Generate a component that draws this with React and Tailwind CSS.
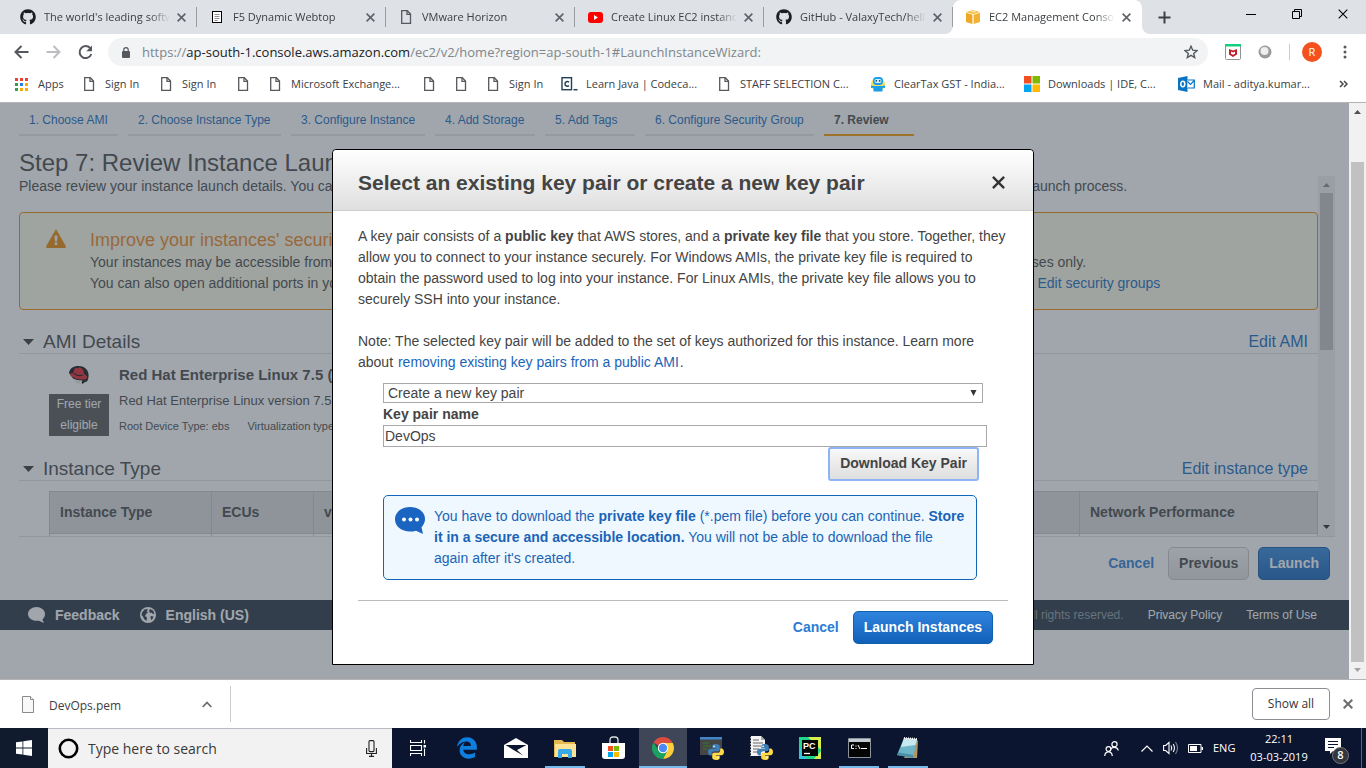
import React from "react";
import { FaGithub, FaEdgeLegacy } from "react-icons/fa";

const ui = "font-['Open_Sans','Noto_Sans',sans-serif]";

/* ---------- icons ---------- */

function PageIcon() {
  return (
    <svg width="12" height="14" viewBox="0 0 12 14" fill="none" stroke="#55585c" strokeWidth="1.3" aria-hidden="true">
      <path d="M1.7.7h5.6l3.2 3.4v9.2H1.7z" />
      <path d="M7 .9v3.5h3.4" />
    </svg>
  );
}

function CloseIcon({ size = 9, color = "#5f6368", weight = 1.8 }) {
  return (
    <svg width={size} height={size} viewBox="0 0 10 10" stroke={color} strokeWidth={weight} aria-hidden="true">
      <path d="M.7.7l8.6 8.6M9.3.7L.7 9.3" />
    </svg>
  );
}

function F5Icon() {
  return (
    <svg width="16" height="16" viewBox="0 0 16 16" aria-hidden="true">
      <rect x="3.5" y="2.5" width="9" height="11" fill="#fff" stroke="#000" />
      <path d="M5.500 5.500h5M5.500 7.500h5M5.500 9.500h5M5.500 11.500h3" stroke="#777" strokeWidth=".8" />
    </svg>
  );
}

function YoutubeIcon() {
  return (
    <svg width="16" height="16" viewBox="0 0 16 16" aria-hidden="true">
      <rect x="1" y="3" width="15" height="11" rx="3" fill="#f00" />
      <path d="M7 6l4 2.500L7 11z" fill="#fff" />
    </svg>
  );
}

function AwsIcon() {
  return (
    <svg width="16" height="16" viewBox="0 0 16 16" aria-hidden="true">
      <path d="M1 3l7-2 7 2-7 2.200z" fill="#f7c04a" />
      <path d="M1 3.800l6.400 2V15L1 13z" fill="#eda926" />
      <path d="M15 3.800l-6.400 2V15l6.400-2z" fill="#f2b233" />
      <path d="M5.500 2.400l3 1 3-1-3-.9z" fill="#fde6ad" />
    </svg>
  );
}

function AppsIcon() {
  const colors = ["#ea4335", "#ea4335", "#ea4335", "#34a04f", "#2b7de9", "#fbaa05", "#34a04f", "#fbaa05", "#fbaa05"];
  return (
    <svg width="14" height="14" viewBox="0 0 14 14" aria-hidden="true">
      {colors.map((c, i) => (
        <rect key={i} x={1 + (i % 3) * 5} y={1 + Math.floor(i / 3) * 5} width="3" height="3" fill={c} />
      ))}
    </svg>
  );
}

function CodecademyIcon() {
  return (
    <svg width="17" height="16" viewBox="0 0 17 16" fill="none" stroke="#204056" aria-hidden="true">
      <rect x="1" y="1.700" width="9.500" height="12" strokeWidth="1.400" />
      <path d="M8 6.200C6.500 5 4 5.600 4 7.900s2.500 2.900 4 1.700" strokeWidth="1.500" />
      <path d="M12.500 13.700h4" strokeWidth="1.500" />
    </svg>
  );
}

function RobotIcon() {
  return (
    <svg width="16" height="16" viewBox="0 0 16 16" aria-hidden="true">
      <circle cx="8" cy="8.500" r="7" fill="#f2e05a" />
      <rect x="3" y="1" width="10" height="8" rx="3.500" fill="#1b9ee8" />
      <rect x="4.500" y="3" width="7" height="4" rx="2" fill="#d8f1ff" />
      <circle cx="6.300" cy="4.800" r=".9" fill="#0b4a78" />
      <circle cx="9.700" cy="4.800" r=".9" fill="#0b4a78" />
      <path d="M1 9.500l3 .5h8l3-.5v2.500l-2.500-.3V15.500h-9v-3.800l-2.500.3z" fill="#1b9ee8" />
    </svg>
  );
}

function MicrosoftIcon({ size = 16 }) {
  return (
    <svg width={size} height={size} viewBox="0 0 16 16" aria-hidden="true">
      <path fill="#f25022" d="M0 0h7.500v7.500H0z" />
      <path fill="#7fba00" d="M8.500 0H16v7.500H8.500z" />
      <path fill="#00a4ef" d="M0 8.500h7.500V16H0z" />
      <path fill="#ffb900" d="M8.500 8.500H16V16H8.500z" />
    </svg>
  );
}

function OutlookIcon() {
  return (
    <svg width="17" height="16" viewBox="0 0 17 16" aria-hidden="true">
      <path d="M0 2l9.500-2v16L0 14z" fill="#0872c4" />
      <path d="M9.500 4h6.800v8H9.500" fill="#fff" stroke="#0872c4" strokeWidth="1.200" />
      <path d="M9.500 5.500l3 3 3.800-4" fill="none" stroke="#0872c4" strokeWidth="1.200" />
      <ellipse cx="4.800" cy="8" rx="2" ry="2.700" fill="none" stroke="#fff" strokeWidth="1.500" />
    </svg>
  );
}

function Triangle({ up = false, color = "#505050", width = 7, height = 4 }) {
  return (
    <svg width={width} height={height} viewBox="0 0 8 4" fill={color} preserveAspectRatio="none" aria-hidden="true">
      <path d={up ? "M0 4h8L4 0z" : "M0 0h8L4 4z"} />
    </svg>
  );
}

function PythonMark(props) {
  return (
    <g {...props}>
      <path d="M7.900 0C4.500 0 4.300 1.500 4.300 2.500v1.700H8v.6H2.500C1 4.800 0 6 0 8s1 3.400 2.400 3.400h1.400V9.600c0-1.300 1.100-2.400 2.400-2.400h3.700c1.100 0 1.900-.9 1.900-2V2.500C11.800 1 10.500 0 7.900 0z" fill="#3f7fb5" />
      <path d="M8.100 16c3.400 0 3.600-1.500 3.600-2.500v-1.700H8v-.6h5.500C15 11.200 16 10 16 8s-1-3.400-2.400-3.400h-1.400v1.800c0 1.300-1.100 2.400-2.400 2.400H6.100c-1.100 0-1.900.9-1.900 2v2.700C4.200 15 5.500 16 8.100 16z" fill="#ffd94a" />
      <circle cx="6" cy="2.400" r=".8" fill="#fff" />
      <circle cx="10" cy="13.600" r=".8" fill="#fff" />
    </g>
  );
}

function RedHatIcon() {
  return (
    <svg width="22" height="20" viewBox="0 0 22 20" aria-hidden="true">
      <path d="M1 8C1.500 3.500 5.500 1 10.500 1 16 1 20 4.500 20.500 9c.3 3-.3 6-1.500 7.500l-2 .5-2.500 2-1-1.500 1-2L9 15l-4-1.500z" fill="#0c0c0c" />
      <path d="M2 9.500c.5-1.300 1.700-1.500 3-1.300L6.500 4c.5-1.400 2-1 3-.7 1-1 2.600-.9 4 0 1.200.7 1.700 1.500 2 3l.7 3c1.800.6 3 1.800 3 3.200 0 1.500-2.500 2.300-5.500 2C8.500 14.200 2.500 12 2 9.500z" fill="#e01f26" />
      <path d="M5.800 8.200c2 2 6 2.800 9 1.800" fill="none" stroke="#0c0c0c" strokeWidth="1.200" />
      <path d="M4 14.500l5 1.500 3.500.4-.8 1.300 1.300 1.300-4-1.200z" fill="#dfdfdf" />
    </svg>
  );
}

/* ---------- browser chrome ---------- */

const tabs = [
  { title: "The world's leading software development platform", icon: <FaGithub size={16} color="#1b1f23" /> },
  { title: "F5 Dynamic Webtop", icon: <F5Icon /> },
  { title: "VMware Horizon", icon: <span className="pl-0.5"><PageIcon /></span> },
  { title: "Create Linux EC2 instance on AWS", icon: <YoutubeIcon /> },
  { title: "GitHub - ValaxyTech/hello-world", icon: <FaGithub size={16} color="#1b1f23" /> },
  { title: "EC2 Management Console", icon: <AwsIcon />, active: true },
];

function Tab({ title, icon, active }) {
  return (
    <div className={active ? "relative flex h-full w-[189px] items-center rounded-t-lg bg-white pl-3 pr-[11px]" : "flex h-full w-[189px] items-center pl-3"}>
      {active && (
        <>
          <svg className="absolute -left-2 bottom-0" width="8" height="8" viewBox="0 0 8 8" fill="#fff" aria-hidden="true"><path d="M8 0v8H0a8 8 0 0 0 8-8z" /></svg>
          <svg className="absolute -right-2 bottom-0" width="8" height="8" viewBox="0 0 8 8" fill="#fff" aria-hidden="true"><path d="M0 0v8h8a8 8 0 0 1-8-8z" /></svg>
        </>
      )}
      <span className="flex w-4 shrink-0 items-center">{icon}</span>
      <span className="ml-2 w-[126px] shrink-0 overflow-hidden whitespace-nowrap text-[11px] leading-4 text-[#3c4043] [mask-image:linear-gradient(to_right,#000_84%,transparent)]">{title}</span>
      <button type="button" aria-label="Close tab" className="ml-[7px] flex w-[9px] shrink-0"><CloseIcon /></button>
      {!active && <span className="ml-auto h-5 w-px bg-[#9a9da1]" />}
    </div>
  );
}

function TabStrip() {
  return (
    <div className="flex h-[34px] shrink-0 bg-[#dee1e6] pl-2">
      {tabs.map((t) => <Tab key={t.title} {...t} />)}
      <button type="button" aria-label="New tab" className="ml-4 flex items-center">
        <svg width="13" height="13" viewBox="0 0 13 13" stroke="#3c4043" strokeWidth="2" aria-hidden="true"><path d="M6.500.5v12M.5 6.500h12" /></svg>
      </button>
      <div className="ml-auto flex h-7 items-center gap-9 pr-[18px]">
        <button type="button" aria-label="Minimize">
          <svg width="10" height="10" viewBox="0 0 10 10" stroke="#000" aria-hidden="true"><path d="M0 5.500h10" /></svg>
        </button>
        <button type="button" aria-label="Restore">
          <svg width="10" height="10" viewBox="0 0 10 10" fill="none" stroke="#000" aria-hidden="true"><path d="M.5 2.500h7v7h-7zM2.500 2.500v-2h7v7h-2" /></svg>
        </button>
        <button type="button" aria-label="Close window"><CloseIcon size={10} color="#000" weight={1.1} /></button>
      </div>
    </div>
  );
}

function Toolbar() {
  return (
    <div className="flex h-9 shrink-0 items-center bg-white pl-[14px] pr-[19px]">
      <div className="flex w-[94px] shrink-0 items-center gap-[17px]">
        <button type="button" aria-label="Back">
          <svg width="15" height="14" viewBox="0 0 15 14" fill="none" stroke="#55595e" strokeWidth="2" aria-hidden="true"><path d="M14.500 7H2M7.500 1L1.500 7l6 6" /></svg>
        </button>
        <button type="button" aria-label="Forward">
          <svg width="15" height="14" viewBox="0 0 15 14" fill="none" stroke="#bcbec1" strokeWidth="2" aria-hidden="true"><path d="M.5 7H13M7.500 1l6 6-6 6" /></svg>
        </button>
        <button type="button" aria-label="Reload">
          <svg width="15" height="15" viewBox="0 0 15 15" fill="none" stroke="#55595e" strokeWidth="2" aria-hidden="true"><path d="M12.200 3.200A6 6 0 1 0 13.300 9" /><path d="M14 .5v5.800H8.300z" fill="#55595e" stroke="none" /></svg>
        </button>
      </div>
      <div className="flex h-7 flex-1 items-center rounded-full bg-[#f1f3f4] pl-[14px] pr-[10px]">
        <svg width="8" height="11" viewBox="0 0 8 11" aria-hidden="true"><path d="M1.800 5V2.800a2.200 2.200 0 0 1 4.400 0V5" fill="none" stroke="#55595e" strokeWidth="1.200" /><rect y="4" width="8" height="7" rx="1" fill="#55595e" /></svg>
        <div className="ml-3 flex-1 whitespace-nowrap text-[13px] leading-5 text-[#80868b]">
          https://<span className="text-[#202124]">ap-south-1.console.aws.amazon.com</span>/ec2/v2/home?region=ap-south-1#LaunchInstanceWizard:
        </div>
        <button type="button" aria-label="Bookmark this page">
          <svg width="14" height="14" viewBox="0 0 14 14" fill="none" stroke="#55595e" strokeWidth="1.400" aria-hidden="true"><path d="M7 1.200l1.700 4 4.300.4-3.300 2.800 1 4.200L7 10.400l-3.700 2.200 1-4.200L1 5.600l4.300-.4z" /></svg>
        </button>
      </div>
      <div className="flex items-center pl-4">
        <svg width="18" height="16" viewBox="0 0 18 16" aria-hidden="true">
          <rect x="1.500" y=".5" width="15" height="15" rx="1" fill="#fff" stroke="#909498" />
          <path d="M1 0h16v2.500H1z" fill="#14cf80" />
          <path d="M5 5l4 1.500L13 5v5.500L9 13l-4-2.500z" fill="#c01f2e" />
          <path d="M7 7.500l2 1 2-1v2.300l-2 1-2-1z" fill="#fff" />
        </svg>
        <svg className="ml-4" width="14" height="14" viewBox="0 0 14 14" aria-hidden="true"><circle cx="7" cy="7" r="6.500" fill="#9b9b9b" /><circle cx="6.500" cy="6" r="4" fill="#eee" /></svg>
        <span className="ml-[17px] h-4 w-px bg-[#c9cbce]" />
        <span className="ml-3 flex size-5 items-center justify-center rounded-full bg-[#f4511e] text-[11px] text-white">R</span>
        <button type="button" aria-label="Menu" className="ml-[21px]">
          <svg width="4" height="14" viewBox="0 0 4 14" fill="#55595e" aria-hidden="true"><circle cx="2" cy="2" r="1.500" /><circle cx="2" cy="7" r="1.500" /><circle cx="2" cy="12" r="1.500" /></svg>
        </button>
      </div>
    </div>
  );
}

const bookmarks = [
  { width: "w-[69px]", label: "Apps", icon: <AppsIcon />, gap: "gap-[10px]" },
  { width: "w-[77px]", label: "Sign In" },
  { width: "w-[77px]", label: "Sign In" },
  { width: "w-[32px]", label: "" },
  { width: "w-[154px]", label: "Microsoft Exchange..." },
  { width: "w-[32px]", label: "" },
  { width: "w-[32px]", label: "" },
  { width: "w-[74px]", label: "Sign In" },
  { width: "w-[157px]", label: "Learn Java | Codeca...", icon: <CodecademyIcon />, gap: "gap-2" },
  { width: "w-[152px]", label: "STAFF SELECTION C..." },
  { width: "w-[154px]", label: "ClearTax GST - India...", icon: <RobotIcon />, gap: "gap-2" },
  { width: "w-[154px]", label: "Downloads | IDE, C...", icon: <MicrosoftIcon />, gap: "gap-2" },
  { width: "w-[140px]", label: "Mail - aditya.kumar...", icon: <OutlookIcon />, gap: "gap-2" },
];

function BookmarksBar() {
  return (
    <nav className="flex h-[33px] shrink-0 items-center border-b border-[#b4b4b6] bg-white pb-1 pl-[14px] pr-[18px] text-[11px] leading-4 text-[#3c4043]">
      {bookmarks.map((b, i) => (
        <a key={i} href="#" aria-label={b.label || "Bookmark"} className={`flex shrink-0 items-center whitespace-nowrap ${b.gap || "gap-[10px]"} ${b.width}`}>
          {b.icon || <PageIcon />}
          {b.label}
        </a>
      ))}
      <button type="button" aria-label="More bookmarks" className="ml-auto">
        <svg width="9" height="8" viewBox="0 0 9 8" fill="none" stroke="#45494d" strokeWidth="1.500" aria-hidden="true"><path d="M1 1l3 3-3 3M5 1l3 3-3 3" /></svg>
      </button>
    </nav>
  );
}

/* ---------- AWS console page ---------- */

const steps = [
  { label: "1. Choose AMI", width: "w-[99px]" },
  { label: "2. Choose Instance Type", width: "w-[153px]" },
  { label: "3. Configure Instance", width: "w-[134px]" },
  { label: "4. Add Storage", width: "w-[100px]" },
  { label: "5. Add Tags", width: "w-[90px]" },
  { label: "6. Configure Security Group", width: "w-[169px]" },
  { label: "7. Review", width: "w-[90px]", current: true },
];

function SectionHeading({ title, action }) {
  return (
    <div className="flex h-[27px] items-center border-b border-[#e0e0e0] pl-1 pr-[10px] pt-1">
      <Triangle width={11} height={6} color="#333" />
      <h2 className="ml-[9px] flex-1 text-[19px] leading-6">{title}</h2>
      <a href="#" className="text-base leading-6 text-[#1166bb]">{action}</a>
    </div>
  );
}

function ReviewPage() {
  return (
    <div className="flex h-full flex-col whitespace-nowrap text-sm text-[#444]">
      <ol className="flex h-[33px] shrink-0 gap-[10px] pl-[19px] text-xs">
        {steps.map((s) => (
          <li key={s.label} className={`border-b-2 pl-[10px] pt-2 leading-[18px] ${s.width} ${s.current ? "border-[#ff9900] font-bold" : "border-[#e4e6e8]"}`}>
            {s.current ? s.label : <a href="#" className="text-[#1166bb]">{s.label}</a>}
          </li>
        ))}
      </ol>
      <h1 className="mt-[14px] shrink-0 pl-[19px] text-2xl leading-[26px]">Step 7: Review Instance Launch</h1>
      <div className="ml-[19px] mr-[14px] flex h-[361px] shrink-0 border-b border-[#e0e0e0]">
        <div className="min-w-0 flex-1 overflow-hidden">
          <p className="leading-[21px]">
            Please review your instance launch details. You can go back to edit changes for each section. Click <b>Launch</b> to assign a key pair to your instance and complete the launch process.
          </p>
          <section className="mt-[15px] flex h-[98px] rounded border border-[#ea8500] bg-[#fcfae6] pl-[26px] pt-[15px]">
            <svg className="mt-px" width="20" height="19" viewBox="0 0 20 19" aria-hidden="true">
              <path d="M10 0l10 17.500q0 1.500-1.200 1.500H1.200Q0 19 0 17.500z" fill="#ea8500" />
              <path d="M8.500 6.500h3l-.5 6H9zM8.700 13.500h2.600V16H8.700z" fill="#fff" />
            </svg>
            <div className="ml-6">
              <h2 className="text-lg leading-6 text-[#f08318]">Improve your instances' security. Your security group, launch-wizard-1, is open to the world.</h2>
              <p className="leading-[21px]">Your instances may be accessible from any IP address. We recommend that you update your security group rules to allow access from known IP addresses only.</p>
              <p className="leading-[21px]">You can also open additional ports in your security group to facilitate access to the application or service you're running, e.g., HTTP (80) for web servers. <a href="#" className="text-[#1166bb]">Edit security groups</a></p>
            </div>
          </section>
          <div className="mt-[17px]"><SectionHeading title="AMI Details" action="Edit AMI" /></div>
          <div className="flex pl-[30px] pt-[11px]">
            <div className="flex w-[60px] flex-col items-center">
              <RedHatIcon />
              <span className="mt-[9px] bg-[#525252] w-full text-center text-xs leading-[21px] text-white">Free tier<br />eligible</span>
            </div>
            <div className="ml-[10px]">
              <h3 className="text-[15px] font-bold leading-5">Red Hat Enterprise Linux 7.5 (HVM), SSD Volume Type</h3>
              <p className="pt-[5px] text-[13px] leading-[21px]">Red Hat Enterprise Linux version 7.5 (HVM), EBS General Purpose (SSD) Volume Type</p>
              <p className="flex gap-[18px] pt-[5px] text-[11px] leading-5"><span>Root Device Type: ebs</span><span>Virtualization type: hvm</span></p>
            </div>
          </div>
          <div className="mt-[18px]"><SectionHeading title="Instance Type" action="Edit instance type" /></div>
          <table className="ml-[30px] mt-[10px] w-[calc(100%-30px)] table-fixed border-collapse text-left">
            <colgroup><col className="w-[162px]" /><col className="w-[102px]" /><col /><col className="w-[238px]" /></colgroup>
            <thead>
              <tr className="h-[42px] bg-[#dbdbdb]">
                {["Instance Type", "ECUs", "vCPUs", "Network Performance"].map((h) => (
                  <th key={h} scope="col" className="border border-[#c4c4c4] px-[10px] pb-0.5">{h}</th>
                ))}
              </tr>
            </thead>
            <tbody>
              <tr className="h-10">
                {["t2.micro", "Variable", "1", "Low to Moderate"].map((c) => (
                  <td key={c} className="border border-[#c4c4c4] px-[10px]">{c}</td>
                ))}
              </tr>
            </tbody>
          </table>
        </div>
        <div className="flex w-[17px] shrink-0 flex-col items-center bg-[#f1f1f1] pb-[7px] pt-[7px]">
          <Triangle up color="#8a8a8a" />
          <div className="mt-[6px] h-[157px] w-[13px] bg-[#c1c1c1]" />
          <div className="mt-auto"><Triangle color="#222" /></div>
        </div>
      </div>
      <div className="flex shrink-0 items-center justify-end py-[10px] pr-[19px] font-bold">
        <a href="#" className="mr-[14px] pb-0.5 text-[#2c7cd6]">Cancel</a>
        <button type="button" className="mr-[9px] h-[33px] rounded-[5px] border border-[#c4c4c4] bg-linear-to-b from-[#f8f8f8] to-[#dfdfdf] px-[10px] pb-0.5 font-bold">Previous</button>
        <button type="button" className="h-[33px] rounded-[5px] border border-[#1257a5] bg-linear-to-b from-[#2f83dd] to-[#1160b8] px-[10px] pb-0.5 font-bold text-white">Launch</button>
      </div>
      <footer className="mt-[10px] flex h-[30px] shrink-0 items-center bg-[#232f3e] pl-7 pr-8 text-white">
        <a href="#" className="flex items-center gap-[10px] font-bold">
          <svg width="17" height="16" viewBox="0 0 17 16" fill="#fff" aria-hidden="true"><path d="M8.500 0C13 0 17 3 17 7c0 2.300-1 4.200-2.600 5.400L16 16l-5.200-2.300C4 14.500 0 11 0 7c0-4 4-7 8.500-7z" /></svg>
          Feedback
        </a>
        <a href="#" className="ml-5 flex items-center gap-[10px] font-bold">
          <svg width="16" height="16" viewBox="0 0 16 16" aria-hidden="true"><circle cx="8" cy="8" r="8" fill="#fff" /><path d="M2 5.500l2.500-3L7 2l1 1-1.500 1L8 5.500 6.500 6.500 5 9l2 1.500L6.500 14 4 12 3 9.500 1.500 8zM10 2l3 1.500 1.500 3-1.500.500-1.500-1.500L10 6 9 4zM10.500 9l3 .5-1 2.500-1.500 1z" fill="#232f3e" /></svg>
          English (US)
        </a>
        <p className="ml-auto flex items-center gap-6 text-xs">
          <span className="text-[#8b98a0]">© 2008 - 2019, Amazon Web Services, Inc. or its affiliates. All rights reserved.</span>
          <a href="#">Privacy Policy</a>
          <a href="#">Terms of Use</a>
        </p>
      </footer>
    </div>
  );
}

function KeyPairDialog() {
  return (
    <div role="dialog" aria-labelledby="dialog-title" className="w-[702px] rounded-t border border-black bg-white text-sm leading-[21px] text-[#444]">
      <header className="flex h-[61px] items-center justify-between rounded-t border-b border-[#ccc] bg-linear-to-b from-white to-[#dfdfdf] pl-[25px] pr-7 pt-1">
        <h2 id="dialog-title" className="text-[21px] font-bold">Select an existing key pair or create a new key pair</h2>
        <button type="button" aria-label="Close dialog"><CloseIcon size={13} color="#333" weight={1.8} /></button>
      </header>
      <div className="px-[25px] pb-5 pt-[15px]">
        <p>
          A key pair consists of a <b>public key</b> that AWS stores, and a <b>private key file</b> that you store. Together, they allow you to connect to your instance securely. For Windows AMIs, the private key file is required to obtain the password used to log into your instance. For Linux AMIs, the private key file allows you to securely SSH into your instance.
        </p>
        <p className="mt-[21px]">
          Note: The selected key pair will be added to the set of keys authorized for this instance. Learn more about <a href="#" className="px-px text-[#1a64b7]">removing existing key pairs from a public AMI</a>.
        </p>
        <div className="pl-[25px] pr-[21px] pt-[10px]">
          <div className="relative mr-1">
            <select aria-label="Key pair option" className="block h-5 w-full appearance-none border border-[#a9a9a9] bg-white pl-1 text-sm leading-[18px]">
              <option>Create a new key pair</option>
            </select>
            <svg className="pointer-events-none absolute right-[6px] top-[7px]" width="7" height="6" viewBox="0 0 7 6" fill="#333" aria-hidden="true"><path d="M.5 0h6L3.500 6z" /></svg>
          </div>
          <label htmlFor="key-name" className="block h-[22px] font-bold leading-[22px]">Key pair name</label>
          <input id="key-name" defaultValue="DevOps" className="block h-[22px] w-full border border-[#a9a9a9] px-px text-sm" />
          <div className="flex justify-end pr-2">
            <button type="button" className="h-[34px] rounded-[3px] border-2 border-[#8db4f5] bg-linear-to-b from-[#f8f8f8] to-[#dedede] px-[10px] pb-0.5 font-bold">Download Key Pair</button>
          </div>
          <div className="mr-[10px] mt-[14px] flex rounded-[5px] border border-[#1166bb] bg-[#f0f8ff] pb-[10px] pl-[11px] pr-2 pt-[10px] text-[#1a64b7]">
            <svg className="mt-px shrink-0" width="31" height="27" viewBox="0 0 31 27" aria-hidden="true">
              <path d="M15 0c8.500 0 15 5 15 12 0 3.500-1.500 6-3.500 8.200L28 27l-7-3.300c-2 .7-4 .9-6 .9C6.500 24.600 0 19.300 0 12.300S6.500 0 15 0z" fill="#1a64c2" />
              <circle cx="9" cy="12.500" r="2" fill="#fff" /><circle cx="15.500" cy="12.500" r="2" fill="#fff" /><circle cx="22" cy="12.500" r="2" fill="#fff" />
            </svg>
            <p className="ml-2">You have to download the <b>private key file</b> (*.pem file) before you can continue. <b>Store it in a secure and accessible location.</b> You will not be able to download the file again after it's created.</p>
          </div>
        </div>
        <div className="mt-5 flex items-center justify-end border-t border-[#bbb] pr-[15px] pt-[10px]">
          <a href="#" className="mr-[14px] font-bold text-[#2c7cd6]">Cancel</a>
          <button type="button" className="h-[33px] rounded-[5px] border border-[#1160b0] bg-linear-to-b from-[#2f83dd] to-[#1160b8] px-[10px] font-bold text-white">Launch Instances</button>
        </div>
      </div>
    </div>
  );
}

function Viewport() {
  return (
    <main className="relative flex min-h-0 flex-1 overflow-hidden font-['Liberation_Sans',Arial,sans-serif]">
      <div className="relative min-w-0 flex-1 overflow-hidden bg-white">
        <ReviewPage />
        <div className="absolute inset-0 bg-[#414e59]/50" />
      </div>
      <div className="flex w-[17px] shrink-0 flex-col items-center bg-[#f1f1f1] py-[7px]">
        <Triangle up />
        <div className="mt-12 w-[13px] flex-1 bg-[#c1c1c1]" />
        <div className="mt-[6px]"><Triangle color="#a3a3a3" /></div>
      </div>
      <div className="absolute inset-x-0 top-[46px] flex justify-center"><KeyPairDialog /></div>
    </main>
  );
}

/* ---------- downloads and taskbar ---------- */

function DownloadsBar() {
  return (
    <div className="flex h-[49px] shrink-0 items-center border-t border-[#b4b4b6] bg-white pr-[13px] text-xs text-[#3c4043]">
      <div className="flex h-9 w-[231px] items-center border-r border-[#c9cbce] pl-[22px] pr-[18px]">
        <svg width="12" height="17" viewBox="0 0 12 17" fill="#f8f8f8" stroke="#8a8a8a" aria-hidden="true"><path d="M.5.500h8l3 3v13H.5z" /><path d="M8.500.500v3h3" /></svg>
        <span className="ml-[15px] pt-1">DevOps.pem</span>
        <button type="button" aria-label="Download options" className="ml-auto">
          <svg width="10" height="7" viewBox="0 0 10 7" fill="none" stroke="#6a6d70" strokeWidth="1.800" aria-hidden="true"><path d="M.7 6L5 1.500 9.300 6" /></svg>
        </button>
      </div>
      <button type="button" className="ml-auto h-8 w-[78px] rounded border border-[#8a8d91] text-xs font-medium text-[#33373b]">Show all</button>
      <button type="button" aria-label="Close downloads bar" className="ml-[13px]"><CloseIcon size={10} color="#6a6d70" weight={2} /></button>
    </div>
  );
}

const apps = [
  {
    name: "Task View",
    icon: (
      <svg width="17" height="16" viewBox="0 0 17 16" fill="none" stroke="#fff" aria-hidden="true"><path d="M.5 0v2.500h11V0M.5 16v-2.500h11V16M.5 5.500h11v5H.5zM14.500 0v3.500M14.500 8.500V16" strokeWidth="1.100" /><path d="M13.500 5h2.500v2.500h-2.500z" fill="#fff" stroke="none" /></svg>
    ),
  },
  { name: "Edge", icon: <FaEdgeLegacy size={22} color="#0f7fdd" /> },
  {
    name: "Mail",
    icon: (
      <svg width="24" height="20" viewBox="0 0 24 20" aria-hidden="true"><path d="M0 7L12 0l12 7v13H0z" fill="#fff" /><path d="M1.500 7h21L13 12l6 5.500L9.500 12z" fill="#0b1530" /></svg>
    ),
  },
  {
    name: "File Explorer",
    running: true,
    icon: (
      <svg width="22" height="19" viewBox="0 0 22 19" aria-hidden="true"><path d="M0 1h8l2 2h11v15H0z" fill="#e6b950" /><path d="M1 5h21v13H1z" fill="#fbe39a" /><path d="M4 19v-7q0-2 2-2h10q2 0 2 2v7h-4v-4H8v4z" fill="#36a9e8" /></svg>
    ),
  },
  {
    name: "Store",
    icon: (
      <svg width="24" height="24" viewBox="0 0 24 24" aria-hidden="true"><path d="M8 7V4q0-3 3-3h2q3 0 3 3v3" fill="none" stroke="#ddd" strokeWidth="1.300" /><path d="M0 7h23v13q0 3-3 3H3q-3 0-3-3z" fill="#fff" /><path d="M6 10h5v5H6z" fill="#f25022" /><path d="M12 10h5v5h-5z" fill="#7fba00" /><path d="M6 16h5v5H6z" fill="#00a4ef" /><path d="M12 16h5v5h-5z" fill="#ffb900" /></svg>
    ),
  },
  {
    name: "Chrome",
    running: true,
    active: true,
    icon: (
      <svg width="22" height="22" viewBox="0 0 22 22" aria-hidden="true">
        <path d="M11 11L1.470 5.500A11 11 0 0 1 20.530 5.500z" fill="#dd4b3e" />
        <path d="M11 6H20.800A11 11 0 0 1 11 22L15.330 13.500z" fill="#fdcd3c" />
        <path d="M6.670 13.500L1.470 5.500A11 11 0 0 0 11 22L15.330 13.500 11 16z" fill="#1aa15f" />
        <circle cx="11" cy="11" r="5.200" fill="#fff" /><circle cx="11" cy="11" r="4.200" fill="#4a8af4" />
      </svg>
    ),
  },
  {
    name: "Python editor",
    icon: (
      <svg width="24" height="24" viewBox="0 0 24 24" aria-hidden="true"><path d="M0 1h22v18H0z" fill="#454545" /><path d="M0 1h22v2.500H0z" fill="#3f86cb" /><path d="M3 7h6M3 10h8M3 13h4" stroke="#3b7a35" /><PythonMark transform="translate(8 8)" /></svg>
    ),
  },
  {
    name: "Python IDLE",
    icon: (
      <svg width="24" height="24" viewBox="0 0 24 24" aria-hidden="true"><path d="M2 0h10l4 4v16H2z" fill="#f4f4f4" /><path d="M12 0v4h4z" fill="#aaa" /><path d="M4 4h6M4 7h10M4 10h8M4 13h6M4 16h5" stroke="#666" /><path d="M1.500 1v19" stroke="#999" strokeDasharray="1.500 1.500" /><PythonMark transform="translate(8 8)" /></svg>
    ),
  },
  {
    name: "PyCharm",
    icon: (
      <svg width="22" height="22" viewBox="0 0 22 22" aria-hidden="true"><path d="M0 0h22v22H0z" fill="#21d789" /><path d="M9 0h13v13z" fill="#d6ee4e" /><path d="M0 8v14h8z" fill="#36c5d8" /><path d="M22 14v8h-7z" fill="#d6ee4e" /><path d="M3 3h16v16H3z" fill="#050505" /><text x="4" y="11.500" fontSize="9" fontWeight="700" fontFamily="Liberation Sans" fill="#fff">PC</text><path d="M5 16.500h6" stroke="#fff" strokeWidth="1.300" /></svg>
    ),
  },
  {
    name: "Command Prompt",
    running: true,
    icon: (
      <svg width="23" height="20" viewBox="0 0 23 20" aria-hidden="true"><path d="M.5.500h22v19H.5z" fill="#050505" stroke="#8d949b" /><path d="M1 1h21v3H1z" fill="#c3cbd3" /><path d="M6 7H3.500v3.500H6M8 7.500v1M8 10v1M10 7l2 4M13 10.500h6" stroke="#fff" fill="none" /></svg>
    ),
  },
  {
    name: "Notepad",
    running: true,
    icon: (
      <svg width="24" height="22" viewBox="0 0 24 22" aria-hidden="true"><path d="M20 2l2 2-1 17H8z" fill="#b39561" /><path d="M8 1l13 1-4 19-16-3z" fill="#6db5c8" /><path d="M8 1l13 1-1.500 6L5 10z" fill="#c7e8ee" /><path d="M2.500 15.500L17.500 18 17 21 1 18z" fill="#4a8fa3" /><path d="M8 1l13 1" stroke="#eee" strokeDasharray="1 1" strokeWidth="2" /></svg>
    ),
  },
];

function Taskbar() {
  return (
    <div className="flex h-10 shrink-0 bg-[#0b1530] text-white">
      <button type="button" aria-label="Start" className="flex w-12 shrink-0 items-center justify-center bg-[#101c2e]">
        <svg width="16" height="16" viewBox="0 0 16 16" fill="#fff" aria-hidden="true"><path d="M0 2.300L6.500 1.400v6.200H0zM7.300 1.300L16 0v7.600H7.300zM0 8.400h6.500v6.200L0 13.700zM7.300 8.400H16V16l-8.700-1.300z" /></svg>
      </button>
      <div className="flex w-[344px] shrink-0 items-center border-t border-[#b9bac2] bg-[#f2f2f2] pl-[10px] pr-[15px]">
        <svg width="21" height="21" viewBox="0 0 21 21" fill="none" stroke="#000" strokeWidth="2.600" aria-hidden="true"><circle cx="10.500" cy="10.500" r="8.700" /></svg>
        <input aria-label="Search" placeholder="Type here to search" className="ml-[9px] min-w-0 flex-1 bg-transparent text-[14px] outline-none placeholder:text-[#3a3a3a]" />
        <svg width="11" height="17" viewBox="0 0 11 17" fill="none" stroke="#222" strokeWidth="1.100" aria-hidden="true"><rect x="3" y=".6" width="5" height="11" rx="1" /><path d="M.6 8v5.500h9.800V8M5.500 13.500V16M3 16.400h5" /></svg>
      </div>
      <div className="flex gap-px pl-0.5">
        {apps.map((a) => (
          <button key={a.name} type="button" aria-label={a.name} className={a.active ? "flex w-12 flex-col items-center bg-[#3f4658]" : "flex w-12 flex-col items-center"}>
            <span className="flex flex-1 items-center pt-0.5">{a.icon}</span>
            <span className={a.active ? "h-0.5 w-full bg-[#76b9ed]" : a.running ? "h-0.5 w-10 bg-[#76b9ed]" : "h-0.5 w-10"} />
          </button>
        ))}
      </div>
      <div className="ml-auto flex items-center text-[11px]">
        <svg width="15" height="15" viewBox="0 0 15 15" fill="none" stroke="#fff" strokeWidth="1.200" aria-hidden="true"><circle cx="10.500" cy="3.200" r="2.600" /><path d="M6.500 8.500c1-3 7-3 7.800 1" /><circle cx="4.500" cy="8" r="2.400" /><path d="M.7 15c.3-5.500 7.300-5.500 7.600 0" /></svg>
        <svg className="ml-[22px]" width="12" height="7" viewBox="0 0 12 7" fill="none" stroke="#fff" strokeWidth="1.200" aria-hidden="true"><path d="M.5 6.500L6 1l5.500 5.500" /></svg>
        <svg className="ml-[10px]" width="16" height="14" viewBox="0 0 16 14" fill="none" stroke="#fff" strokeWidth="1.100" aria-hidden="true"><path d="M.6 4.500h2L6 1.500v11l-3.400-3h-2z" /><path d="M8 4.500q1.500 2.500 0 5M10.200 3q2.500 4 0 8" /><path d="M12.500 1q4 6 0 12" stroke="#7b8191" /></svg>
        <svg className="ml-[9px]" width="15" height="9" viewBox="0 0 15 9" aria-hidden="true"><path d="M.5.500h12.500v8H.5z" fill="none" stroke="#fff" /><path d="M2 2h7v5H2zM13.500 3H15v3h-1.500z" fill="#fff" /></svg>
        <span className="ml-[10px] w-[26px]">ENG</span>
        <time className="ml-[6px] w-[68px] text-center leading-[18px]">22:11<br />03-03-2019</time>
        <span className="relative ml-3 flex h-full w-[26px] items-center pb-1">
          <svg width="16" height="16" viewBox="0 0 16 16" aria-hidden="true"><path d="M0 0h16v13H8l-3 3v-3H0z" fill="#fff" /><path d="M3 3.500h10M3 6.500h10M3 9.500h6" stroke="#0b1530" /></svg>
          <span className="absolute left-[7px] top-[19px] flex size-[17px] items-center justify-center rounded-full border border-[#777] bg-[#33373d] font-semibold">8</span>
        </span>
        <span className="ml-[10px] mr-1 h-full w-px bg-[#5a6172]" />
      </div>
    </div>
  );
}

export default function App() {
  return (
    <div className={`flex h-screen flex-col overflow-hidden ${ui}`}>
      <TabStrip />
      <Toolbar />
      <BookmarksBar />
      <Viewport />
      <DownloadsBar />
      <Taskbar />
    </div>
  );
}
